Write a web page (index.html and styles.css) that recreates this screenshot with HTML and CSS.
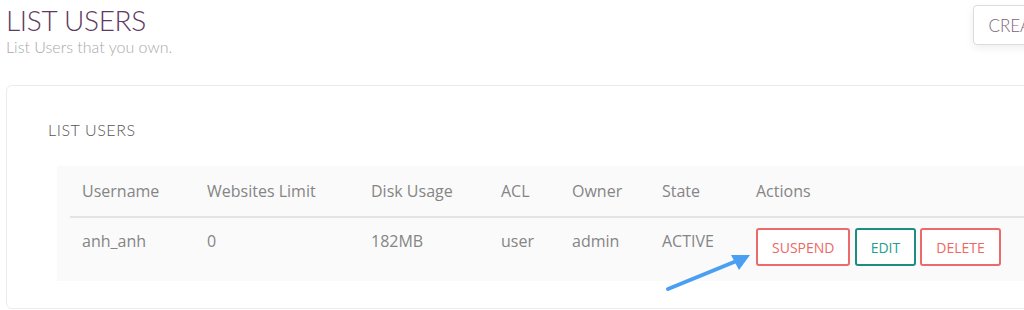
FILE: index.html
```html
<!DOCTYPE html>
<html lang="en">
<head>
    <meta charset="UTF-8">
    <meta name="viewport" content="width=device-width, initial-scale=1.0">
    <title>List Users</title>
    <link rel="stylesheet" href="styles.css">
</head>
<body>
    <div class="page">
        <div class="page-header">
            <div>
                <h1 class="page-title">LIST USERS</h1>
                <p class="page-subtitle">List Users that you own.</p>
            </div>
            <button class="btn-create">CREATE USER</button>
        </div>

        <div class="card">
            <h2 class="card-title">LIST USERS</h2>
            <div class="table-wrap">
                <table class="users-table">
                    <thead>
                        <tr>
                            <th class="col-user">Username</th>
                            <th class="col-sites">Websites Limit</th>
                            <th class="col-disk">Disk Usage</th>
                            <th class="col-acl">ACL</th>
                            <th class="col-owner">Owner</th>
                            <th class="col-state">State</th>
                            <th>Actions</th>
                        </tr>
                    </thead>
                    <tbody>
                        <tr>
                            <td>anh_anh</td>
                            <td>0</td>
                            <td>182MB</td>
                            <td>user</td>
                            <td>admin</td>
                            <td>ACTIVE</td>
                            <td class="actions">
                                <button class="btn btn-danger">SUSPEND</button>
                                <button class="btn btn-edit">EDIT</button>
                                <button class="btn btn-danger">DELETE</button>
                            </td>
                        </tr>
                    </tbody>
                </table>
                <!-- annotation arrow pointing at the suspend button -->
                <svg class="arrow" width="100" height="50" viewBox="0 0 100 50">
                    <line x1="9" y1="44" x2="80" y2="15" stroke="#4a9ff2" stroke-width="4" stroke-linecap="round"/>
                    <polygon points="91,10 72,10 80,25" fill="#4a9ff2"/>
                </svg>
            </div>
        </div>
    </div>
</body>
</html>
```

FILE: styles.css
```css
body {
    margin: 0;
    background: #fff;
    overflow: hidden;
    font-family: 'Open Sans', 'Noto Sans', Arial, sans-serif;
}
.page {
    width: 1105px;
    padding: 0 0 0 6px;
}
.page-header {
    display: flex;
    justify-content: space-between;
    align-items: flex-start;
    height: 85px;
}
.page-title {
    margin: 4px 0 0;
    font-family: Lato, 'Open Sans', sans-serif;
    font-weight: 300;
    font-size: 28px;
    line-height: 32px;
    color: #5e3a5f;
    letter-spacing: -0.3px;
}
.page-subtitle {
    margin: 1px 0 0;
    font-family: Lato, 'Open Sans', sans-serif;
    font-weight: 300;
    font-size: 16px;
    color: #a9a9a9;
}
.btn-create {
    margin-top: 5px;
    height: 40px;
    padding: 0 14px;
    background: #fff;
    border: 1px solid #dcdcdc;
    border-radius: 4px;
    box-shadow: 0 3px 8px rgba(0,0,0,0.07);
    font-family: Lato, 'Open Sans', sans-serif;
    font-weight: 300;
    font-size: 17px;
    color: #7d6378;
}
.card {
    border: 1px solid #ececec;
    border-radius: 6px;
    padding: 34px 0 27px 41px;
    background: #fff;
}
.card-title {
    margin: 0 0 26px;
    font-family: Lato, 'Open Sans', sans-serif;
    font-weight: 300;
    font-size: 16px;
    line-height: 20px;
    letter-spacing: 0.6px;
    color: #555;
}
.table-wrap {
    position: relative;
    margin-left: 9px;
    padding: 0 0 0 13px;
    background: #fafafa;
    height: 115px;
}
.users-table {
    width: 100%;
    border-collapse: collapse;
    font-size: 16px;
    color: #858585;
}
.users-table th {
    font-weight: 400;
    text-align: left;
    padding: 0 12px;
    height: 50px;
    vertical-align: middle;
    border-bottom: 2px solid #e4e4e4;
}
.users-table td {
    padding: 11px 12px 0;
    line-height: 24px;
    vertical-align: top;
}
.col-user { width: 101px; }
.col-sites { width: 140px; }
.col-disk { width: 106px; }
.col-acl { width: 47px; }
.col-owner { width: 66px; }
.col-state { width: 70px; }
.users-table td.actions {
    padding-top: 10px;
    white-space: nowrap;
}
.btn {
    background: #fff;
    border: 2px solid;
    border-radius: 3px;
    height: 38px;
    padding: 0 14px;
    font-family: 'Open Sans', Arial, sans-serif;
    font-size: 14px;
    margin-right: 0;
    vertical-align: top;
}
.btn-danger {
    border-color: #ec6a6a;
    color: #ee6767;
}
.btn-edit {
    border-color: #1c8e80;
    color: #22a08f;
}
.arrow {
    position: absolute;
    left: 602px;
    top: 79px;
}
```
